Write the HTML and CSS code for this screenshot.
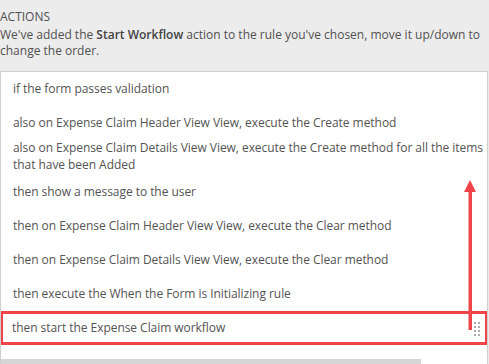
FILE: index.html
```html
<!DOCTYPE html>
<html lang="en">
<head>
  <meta charset="UTF-8">
  <title>Actions</title>
  <link rel="stylesheet" href="styles.css">
</head>
<body>
  <div class="panel">
    <div class="panel-title">ACTIONS</div>
    <p class="panel-help">We've added the <b>Start Workflow</b> action to the rule you've chosen, move it up/down to change the order.</p>

    <div class="action-box">
      <ul class="action-list">
        <li class="action">if the form passes validation</li>
        <li class="action join-below">also on Expense Claim Header View View, execute the Create method</li>
        <li class="action join-above join-below">also on Expense Claim Details View View, execute the Create method for all the items that have been Added</li>
        <li class="action join-above">then show a message to the user</li>
        <li class="action">then on Expense Claim Header View View, execute the Clear method</li>
        <li class="action">then on Expense Claim Details View View, execute the Clear method</li>
        <li class="action">then execute the When the Form is Initializing rule</li>
        <li class="action selected">
          <span>then start the Expense Claim workflow</span>
          <span class="grip"><i></i><i></i><i></i><i></i><i></i><i></i><i></i><i></i></span>
        </li>
      </ul>

      <svg class="move-arrow" width="14" height="154" viewBox="0 0 14 154">
        <polygon points="7,0 13,12 1,12" fill="#f0444b"/>
        <rect x="5.5" y="11" width="3.5" height="139" fill="#f0444b"/>
      </svg>

      <div class="hscroll"><div class="hscroll-thumb"></div></div>
    </div>
  </div>
</body>
</html>
```

FILE: styles.css
```css
html, body {
  margin: 0;
  padding: 0;
  background: #ececec;
  font-family: "Open Sans", "Liberation Sans", sans-serif;
  font-size: 12px;
  color: #4a4a4a;
  overflow: hidden;
}

.panel {
  padding-top: 9px;
}

.panel-title {
  line-height: 16px;
  color: #505050;
}

.panel-help {
  margin: 2px 0 0;
  line-height: 16px;
  color: #505050;
}

.panel-help b {
  font-weight: 600;
  color: #444;
}

.action-box {
  position: relative;
  margin-top: 12px;
  width: 486px;
  background: #fff;
  border: 1px solid #cfcfcf;
  border-bottom: none;
  overflow: hidden;
}

.action-list {
  list-style: none;
  margin: 0 -14px 0 0;
  padding: 0;
}

.action {
  display: flex;
  align-items: center;
  padding: 8px 4px 9px 12px;
  line-height: 17px;
  letter-spacing: -0.05px;
  color: #535353;
}

.action.join-below { padding-bottom: 4px; }
.action.join-above { padding-top: 4px; }
.action:nth-child(2) { padding-top: 8px; }
.action:nth-child(4) { padding-top: 6px; }

.action.selected {
  padding: 5px 3px 6px 9px;
  border: 3px solid #f0444b;
  margin-left: -1px;
  margin-right: 13px;
}

.action.selected span:first-child {
  flex: 1;
}

.grip {
  display: grid;
  grid-template-columns: 2px 2px;
  grid-auto-rows: 2px;
  column-gap: 2px;
  row-gap: 2px;
  margin-top: 2px;
  margin-right: 2px;
}

.grip i {
  display: block;
  background: #acacac;
}

.move-arrow {
  position: absolute;
  left: 462px;
  top: 108px;
}

.hscroll {
  height: 20px;
  display: flex;
  align-items: flex-end;
  padding-bottom: 2px;
}

.hscroll-thumb {
  width: 420px;
  height: 6px;
  background: #d6d6d6;
}
```
